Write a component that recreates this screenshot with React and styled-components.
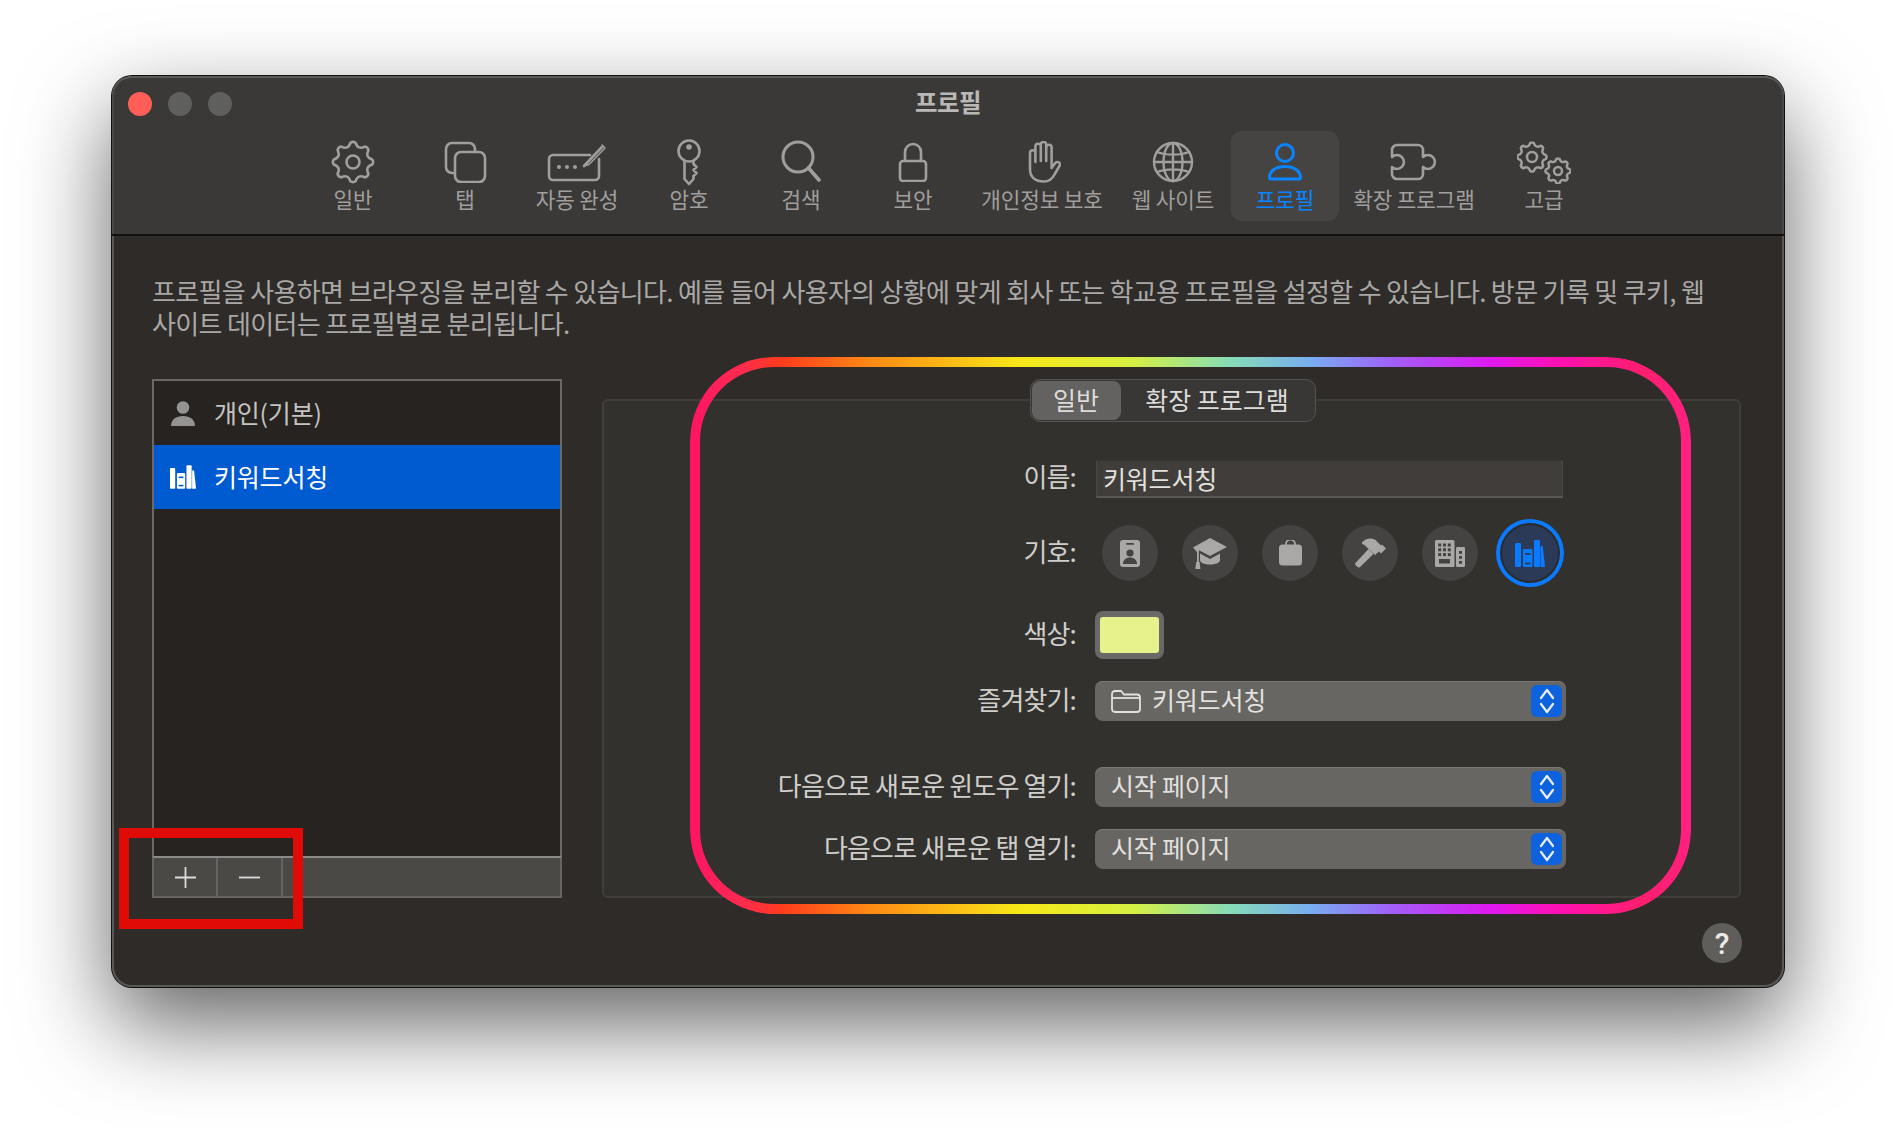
import React from 'react'
import styled, { createGlobalStyle } from 'styled-components'

const GlobalStyle = createGlobalStyle`
  html, body {
    margin: 0;
    padding: 0;
    background: #ffffff;
  }
  body {
    font-family: "Noto Sans CJK KR", "Noto Sans", sans-serif;
    overflow: hidden;
  }
`

const Page = styled.div`
  width: 1896px;
  height: 1136px;
  padding: 76px 0 0 112px;
  box-sizing: border-box;
  background: #ffffff;
`
const Window = styled.div`
  position: relative;
  width: 1672px;
  height: 911px;
  display: flex;
  flex-direction: column;
  border-radius: 20px;
  background: #2e2b29;
  box-shadow: 0 0 0 1px #111, inset 0 0 0 2px #5a5956, 0 36px 90px rgba(0, 0, 0, 0.62);
`
const TitleBar = styled.div`
  height: 160px;
  flex: none;
  display: flex;
  flex-direction: column;
  box-sizing: border-box;
  background: #3a3938;
  border-radius: 20px 20px 0 0;
  border-bottom: 2px solid #131211;
  box-shadow: inset 0 2px 0 #5a5956, inset 2px 0 0 #4a4947, inset -2px 0 0 #4a4947;
`
const TitleRow = styled.div`
  height: 55px;
  flex: none;
  display: grid;
  grid-template-columns: 1fr auto 1fr;
  align-items: center;
  padding: 0 16px;
`
const Lights = styled.div`
  display: flex;
  gap: 16px;
  margin-top: 1px;
`
const Light = styled.span`
  width: 24px;
  height: 24px;
  border-radius: 50%;
  background: ${({ $color }) => $color};
`
const Title = styled.div`
  font-size: 24.5px;
  font-weight: 700;
  color: #b9b8b6;
  line-height: 30px;
  letter-spacing: -0.5px;
  margin-bottom: 3px;
`
const Toolbar = styled.div`
  display: flex;
  justify-content: center;
`
const ToolItem = styled.div`
  width: ${({ $w }) => $w}px;
  height: 90px;
  box-sizing: border-box;
  padding-top: 9px;
  display: flex;
  flex-direction: column;
  align-items: center;
  border-radius: 11px;
  background: ${({ $active }) => ($active ? '#454443' : 'transparent')};
  color: ${({ $active }) => ($active ? '#0a84ff' : '#a09f9d')};
`
const ToolIcon = styled.div`
  height: 44px;
  display: flex;
  align-items: center;
  justify-content: center;
`
const ToolLabel = styled.div`
  font-size: 21.3px;
  line-height: 26px;
  margin-top: 2px;
  white-space: nowrap;
  letter-spacing: -0.1px;
`
const Body = styled.div`
  flex: 1;
  display: flex;
  flex-direction: column;
  padding: 39px 43px 0 40px;
`
const Desc = styled.p`
  margin: 0;
  font-size: 26px;
  line-height: 32px;
  color: #a9a8a6;
  white-space: nowrap;
  letter-spacing: -0.66px;
`
const Main = styled.div`
  display: flex;
  margin-top: 40px;
  gap: 40px;
  height: 519px;
`
const ListBox = styled.div`
  width: 410px;
  flex: none;
  display: flex;
  flex-direction: column;
  box-sizing: border-box;
  border: 2px solid #6a6967;
  background: #262320;
`
const ListRows = styled.div`
  flex: 1;
`
const ListRow = styled.div`
  height: 64px;
  display: flex;
  align-items: center;
  box-sizing: border-box;
  padding-left: 15px;
  gap: 18px;
  font-size: 25px;
  letter-spacing: -0.2px;
  background: ${({ $selected }) => ($selected ? '#005bd1' : 'transparent')};
  color: ${({ $selected }) => ($selected ? '#ffffff' : '#c4c3c1')};
`
const RowText = styled.span`
  padding-bottom: 2px;
`
const RowIcon = styled.div`
  width: 27px;
  display: flex;
  justify-content: center;
  color: ${({ $selected }) => ($selected ? '#ffffff' : '#949391')};
`
const ListFooter = styled.div`
  height: 38px;
  display: flex;
  border-top: 2px solid #8a8a88;
  background: #4a4946;
  margin: 0 -2px -2px;
  border-left: 2px solid #666563;
  border-right: 2px solid #666563;
  border-bottom: 2px solid #666563;
`
const FooterButton = styled.div`
  width: ${({ $w }) => $w}px;
  display: flex;
  align-items: center;
  justify-content: center;
  border-right: 2px solid #666563;
  color: #dddcda;
`
const Panel = styled.div`
  flex: 1;
  margin-top: 20px;
  box-sizing: border-box;
  border: 2px solid #403e3b;
  border-radius: 6px;
  background: #33312e;
  display: flex;
  flex-direction: column;
  align-items: center;
`
const Tabs = styled.div`
  margin: -22px 0 0 2px;
  height: 43px;
  box-sizing: border-box;
  display: flex;
  padding: 1px;
  border: 1px solid #55534f;
  border-radius: 10px;
  background: #393735;
`
const Tab = styled.div`
  width: ${({ $w }) => $w}px;
  display: flex;
  align-items: center;
  justify-content: center;
  font-size: 25px;
  padding-bottom: 3px;
  box-sizing: border-box;
  border-radius: 8px;
  color: #dddcda;
  background: ${({ $active }) => ($active ? '#636260' : 'transparent')};
`
const Form = styled.div`
  align-self: stretch;
  display: flex;
  flex-direction: column;
`
const FormRow = styled.div`
  display: grid;
  grid-template-columns: 472px 1fr;
  column-gap: 19px;
  align-items: center;
  height: ${({ $h }) => $h}px;
  margin-top: ${({ $mt }) => $mt}px;
`
const Label = styled.div`
  text-align: right;
  font-size: 26px;
  line-height: 34px;
  padding-bottom: 5px;
  color: #cfcecb;
  white-space: nowrap;
  letter-spacing: -0.85px;
`
const NameInput = styled.div`
  margin-left: 1px;
  width: 467px;
  height: 38px;
  box-sizing: border-box;
  padding-left: 6px;
  display: flex;
  align-items: center;
  font-size: 25px;
  letter-spacing: -0.2px;
  color: #e2e1df;
  background: #403d3a;
  border: 1px solid #4a4845;
  border-top-color: #383633;
  border-bottom: 2px solid #5a5855;
`
const Symbols = styled.div`
  display: flex;
  align-items: center;
  gap: 24px;
  padding-left: 7px;
`
const SymbolButton = styled.div`
  width: 56px;
  height: 56px;
  flex: none;
  border-radius: 50%;
  display: flex;
  align-items: center;
  justify-content: center;
  background: ${({ $active }) => ($active ? '#2a3a57' : '#444342')};
  color: ${({ $active }) => ($active ? '#0a7aff' : '#a9a8a6')};
  ${({ $active }) => $active && 'box-shadow: 0 0 0 2px #2c2b2a, 0 0 0 6px #0a7aff;'}
`
const ColorWell = styled.div`
  width: 69px;
  height: 48px;
  box-sizing: border-box;
  padding: 6px 5px;
  border-radius: 8px;
  background: #6a6967;
  &::after {
    content: '';
    display: block;
    height: 100%;
    border-radius: 3px;
    background: #e8f28c;
  }
`
const Select = styled.div`
  width: 471px;
  height: 40px;
  box-sizing: border-box;
  display: flex;
  align-items: center;
  padding: 0 4px 0 16px;
  gap: 11px;
  border-radius: 8px;
  background: #676663;
  box-shadow: inset 0 1px 0 #7a7977;
  font-size: 25px;
  color: #e2e1df;
`
const SelectText = styled.span`
  flex: 1;
  padding-bottom: 4px;
  letter-spacing: -0.2px;
`
const Stepper = styled.div`
  width: 31px;
  height: 32px;
  flex: none;
  border-radius: 6px;
  background: #0f62dd;
  display: flex;
  align-items: center;
  justify-content: center;
`
const HelpRow = styled.div`
  display: flex;
  justify-content: flex-end;
  margin-top: 25px;
  margin-right: -1px;
`
const Help = styled.div`
  width: 40px;
  height: 40px;
  border-radius: 50%;
  background: #5f5e5b;
  color: #ebeae8;
  display: flex;
  align-items: center;
  justify-content: center;
  font-family: Roboto, sans-serif;
  font-size: 30px;
  font-weight: 500;
`
const RainbowRing = styled.div`
  position: absolute;
  left: 578px;
  top: 281px;
  width: 1001px;
  height: 557px;
  box-sizing: border-box;
  padding: 10px;
  border-radius: 84px;
  pointer-events: none;
  background: linear-gradient(
    90deg,
    #ff1464 0%,
    #ff2a50 5%,
    #ff3a1e 9%,
    #ff8a14 18%,
    #f8e818 33%,
    #d8f040 44%,
    #86dcb8 54%,
    #78aef0 62%,
    #a060f8 70%,
    #e018f0 80%,
    #ff10b0 87%,
    #ff1e6e 95%,
    #ff2080 100%
  );
  mask: linear-gradient(#000 0 0) content-box exclude, linear-gradient(#000 0 0);
`
const RedBox = styled.div`
  position: absolute;
  left: 7px;
  top: 752px;
  width: 184px;
  height: 101px;
  box-sizing: border-box;
  border: 10px solid #e00a06;
  pointer-events: none;
`

// icons
const gearPath = (cx, cy, R, r, n) => {
  const pt = (rad, a) => `${(cx + rad * Math.cos(a)).toFixed(2)} ${(cy + rad * Math.sin(a)).toFixed(2)}`
  const s = (Math.PI * 2) / n
  let d = ''
  for (let i = 0; i < n; i++) {
    const a = i * s - Math.PI / 2
    const start = pt(R * 0.97, a - s * 0.17)
    const end = pt(R * 0.97, a + s * 0.17)
    if (i === 0) d += `M${start}`
    d += ` Q${pt(R * 1.05, a)} ${end}`
    const mid = a + s / 2
    d += ` Q${pt(r * 0.78, mid)} ${pt(R * 0.97, a + s - s * 0.17)}`
  }
  return d + 'Z'
}

const Stroke = ({ w, h, sw = 2.6, children }) => (
  <svg width={w} height={h} viewBox={`0 0 ${w} ${h}`} fill="none" stroke="currentColor"
    strokeWidth={sw} strokeLinecap="round" strokeLinejoin="round">
    {children}
  </svg>
)

const GearIcon = () => (
  <Stroke w={44} h={44}>
    <path d={gearPath(22, 22, 20, 16.5, 8)} />
    <circle cx="22" cy="22" r="6.5" />
  </Stroke>
)
const TabsIcon = () => (
  <Stroke w={44} h={42}>
    <path d="M10 31h-1a6 6 0 0 1-6-6V7a6 6 0 0 1 6-6h17a6 6 0 0 1 6 6v3" transform="translate(0 1)" />
    <rect x="12" y="11" width="30" height="30" rx="6" />
  </Stroke>
)
const AutofillIcon = () => (
  <Stroke w={62} h={40}>
    <path d="M44 13H7a4 4 0 0 0-4 4v17a4 4 0 0 0 4 4h42a4 4 0 0 0 4-4V17" />
    <path d="M38 24L56 5" />
    <path d="M38 24l5-1.5L59 6l-3-3" strokeWidth="1.6" />
    <circle cx="13" cy="25" r="2" fill="currentColor" stroke="none" />
    <circle cx="21" cy="25" r="2" fill="currentColor" stroke="none" />
    <circle cx="29" cy="25" r="2" fill="currentColor" stroke="none" />
  </Stroke>
)
const KeyIcon = () => (
  <Stroke w={26} h={48}>
    <circle cx="13" cy="13" r="10.5" />
    <circle cx="13" cy="9" r="2.8" fill="currentColor" stroke="none" />
    <path d="M8.5 23V41L13 46L17.5 41V38l3-3-3-3 3-3-3-3V23" />
  </Stroke>
)
const SearchIcon = () => (
  <Stroke w={40} h={44} sw={3}>
    <circle cx="17" cy="17" r="15" />
    <path d="M27.5 28L38 40" strokeWidth="3.6" />
  </Stroke>
)
const LockIcon = () => (
  <Stroke w={30} h={40}>
    <rect x="2" y="19" width="26" height="20" rx="3" />
    <path d="M7 19V10a8 8 0 0 1 16 0V19" />
  </Stroke>
)
const HandIcon = () => (
  <Stroke w={38} h={42}>
    <path d="M7 28V12a2.700 2.700 0 0 1 5.400 0V21M12.400 21V5.500a2.700 2.700 0 0 1 5.400 0V20M17.800 20V3.700a2.700 2.700 0 0 1 5.400 0V20M23.200 20V6.500a2.700 2.700 0 0 1 5.400 0V27l3.200-4.600c1.800-2.600 6.200-1 5 2L31.500 33.500C29 38.500 25 40.500 21 40.500C12 40.500 7 36 7 28" />
  </Stroke>
)
const GlobeIcon = () => (
  <Stroke w={42} h={42} sw={2.4}>
    <circle cx="21" cy="21" r="19" />
    <ellipse cx="21" cy="21" rx="9.5" ry="19" />
    <path d="M21 2V40M2 21H40M5 11C14 14.5 28 14.5 37 11M5 31C14 27.5 28 27.5 37 31" />
  </Stroke>
)
const PersonIcon = () => (
  <Stroke w={36} h={40} sw={3}>
    <circle cx="18" cy="11" r="8.5" />
    <path d="M2.5 35.5C2.5 29 9 24.5 18 24.5S33.5 29 33.5 35.5C33.5 36.5 33 37 32 37H4C3 37 2.5 36.5 2.500 35.500Z" />
  </Stroke>
)
const PuzzleIcon = () => (
  <Stroke w={48} h={38}>
    <path d="M7 2H28a5 5 0 0 1 5 5V14a7 7 0 1 1 0 10V31a5 5 0 0 1-5 5H7a5 5 0 0 1-5-5V24a7 7 0 1 0 0-10V7a5 5 0 0 1 5-5Z" />
  </Stroke>
)
const GearsIcon = () => (
  <Stroke w={54} h={44} sw={2.5}>
    <path d={gearPath(15, 17, 14.5, 12, 8)} />
    <circle cx="15" cy="17" r="5" />
    <path d={gearPath(41, 31, 12.5, 10.2, 8)} />
    <circle cx="41" cy="31" r="4" />
  </Stroke>
)

const Books = ({ w = 30, h = 27, cut = '#2a3a57' }) => (
  <svg width={w} height={h} viewBox="0 0 30 27" fill="currentColor">
    <rect x="0" y="3" width="6" height="24" rx="1.2" />
    <rect x="8" y="9" width="9.5" height="18" rx="1.2" />
    <rect x="10" y="13" width="5.5" height="1.8" fill={cut} />
    <rect x="10" y="22.5" width="5.5" height="1.8" fill={cut} />
    <rect x="19" y="0" width="6" height="27" rx="1.2" />
    <path d="M25.5 6.2l2.2-.4L30 26.2c0 .5-.3.8-.8.8h-3.7z" />
  </svg>
)
const UserFill = () => (
  <svg width="24" height="25" viewBox="0 0 24 25" fill="currentColor">
    <circle cx="12" cy="6.5" r="6.3" />
    <path d="M0 25C0 18.5 5 15 12 15s12 3.5 12 10z" />
  </svg>
)
const BadgeSymbol = () => (
  <svg width="20" height="27" viewBox="0 0 20 27" fill="currentColor">
    <rect width="20" height="27" rx="3" />
    <rect x="6" y="3" width="8" height="1.8" rx=".9" fill="#444342" />
    <circle cx="10" cy="13" r="3.6" fill="#444342" />
    <path d="M3 24c0-4 3-6.500 7-6.500S17 20 17 24z" fill="#444342" />
  </svg>
)
const CapSymbol = () => (
  <svg width="34" height="31" viewBox="0 0 34 31" fill="currentColor">
    <path d="M17 0L34 9 17 18 6 12.300V15L3.500 13.500 0 9.500Z" />
    <path d="M7 15.500V22C7 28 27 28 27 22V15.500L17 21Z" />
    <rect x="4" y="13" width="1.800" height="11" />
    <path d="M3.200 24h3.400l.8 7H2.400Z" />
  </svg>
)
const BagSymbol = () => (
  <svg width="23" height="26" viewBox="0 0 23 26" fill="currentColor">
    <rect y="4.500" width="23" height="21" rx="3.500" />
    <path d="M7 5V4a4 4 0 0 1 9 0v1" fill="none" stroke="currentColor" strokeWidth="1.800" />
  </svg>
)
const HammerSymbol = () => (
  <svg width="32" height="30" viewBox="0 0 32 30" fill="currentColor">
    <path d="M1 25.500L14.500 11l5 5L5.500 29.500C4 30 0.500 26.500 1 25.500Z" />
    <path d="M8 4.500C12 0 19 -1 23 3.500L27 7.500 28 6.500 32 10.500 27 15.500 25 13.500 21 17 13 9.500C12 8 10 6.500 8 6Z" />
  </svg>
)
const BuildingSymbol = () => {
  const cells = []
  for (let r = 0; r < 3; r++) {
    for (let c = 0; c < 3; c++) {
      cells.push(<rect key={`${r}${c}`} x={3.2 + c * 4.8} y={3.5 + r * 4.8} width="3" height="3" fill="#444342" />)
    }
  }
  return (
    <svg width="30" height="27" viewBox="0 0 30 27" fill="currentColor">
      <rect width="19.500" height="27" rx="1.500" />
      {cells}
      <rect x="4" y="19" width="11" height="4.500" fill="#444342" />
      <rect x="21" y="7" width="9" height="20" rx="1.200" />
      {[11, 16, 21].map((y) => (
        <rect key={y} x="24" y={y} width="3" height="2.800" fill="#444342" />
      ))}
    </svg>
  )
}
const FolderIcon = () => (
  <svg width="30" height="24" viewBox="0 0 30 24" fill="none" stroke="#e2e1df" strokeWidth="1.800">
    <path d="M1 5a3 3 0 0 1 3-3h6l3 3.500h13a3 3 0 0 1 3 3V20a3 3 0 0 1-3 3H4a3 3 0 0 1-3-3Z" />
    <path d="M1 9H29" />
  </svg>
)
const Chevrons = () => (
  <svg width="18" height="26" viewBox="0 0 18 26" fill="none" stroke="#e8eefc" strokeWidth="2.200"
    strokeLinecap="round" strokeLinejoin="round">
    <path d="M3 10L9 2l6 8" />
    <path d="M3 16l6 8 6-8" />
  </svg>
)
const Plus = () => (
  <svg width="21" height="21" viewBox="0 0 21 21" stroke="currentColor" strokeWidth="1.800">
    <path d="M10.500 0V21M0 10.500H21" />
  </svg>
)
const Minus = () => (
  <svg width="21" height="21" viewBox="0 0 21 21" stroke="currentColor" strokeWidth="1.800">
    <path d="M0 10.500H21" />
  </svg>
)

const tools = [
  { label: '일반', w: 112, icon: <GearIcon /> },
  { label: '탭', w: 112, icon: <TabsIcon /> },
  { label: '자동 완성', w: 112, icon: <AutofillIcon /> },
  { label: '암호', w: 112, icon: <KeyIcon /> },
  { label: '검색', w: 112, icon: <SearchIcon /> },
  { label: '보안', w: 112, icon: <LockIcon /> },
  { label: '개인정보 보호', w: 146, icon: <HandIcon /> },
  { label: '웹 사이트', w: 116, icon: <GlobeIcon /> },
  { label: '프로필', w: 108, icon: <PersonIcon />, active: true },
  { label: '확장 프로그램', w: 150, icon: <PuzzleIcon /> },
  { label: '고급', w: 110, icon: <GearsIcon /> },
]

const symbols = [<BadgeSymbol />, <CapSymbol />, <BagSymbol />, <HammerSymbol />, <BuildingSymbol />]

function App() {
  return (
    <Page>
      <GlobalStyle />
      <Window>
        <TitleBar>
          <TitleRow>
            <Lights>
              <Light $color="#ff5f57" />
              <Light $color="#5f5f5e" />
              <Light $color="#5f5f5e" />
            </Lights>
            <Title>프로필</Title>
          </TitleRow>
          <Toolbar>
            {tools.map((t) => (
              <ToolItem key={t.label} $w={t.w} $active={t.active}>
                <ToolIcon>{t.icon}</ToolIcon>
                <ToolLabel>{t.label}</ToolLabel>
              </ToolItem>
            ))}
          </Toolbar>
        </TitleBar>
        <Body>
          <Desc>
            프로필을 사용하면 브라우징을 분리할 수 있습니다. 예를 들어 사용자의 상황에 맞게 회사 또는 학교용 프로필을 설정할 수 있습니다. 방문 기록 및 쿠키, 웹
            <br />
            사이트 데이터는 프로필별로 분리됩니다.
          </Desc>
          <Main>
            <ListBox>
              <ListRows>
                <ListRow>
                  <RowIcon><UserFill /></RowIcon>
                  <RowText>개인(기본)</RowText>
                </ListRow>
                <ListRow $selected>
                  <RowIcon $selected><Books w={26} h={24} cut="#005bd1" /></RowIcon>
                  <RowText>키워드서칭</RowText>
                </ListRow>
              </ListRows>
              <ListFooter>
                <FooterButton $w={62}><Plus /></FooterButton>
                <FooterButton $w={63}><Minus /></FooterButton>
              </ListFooter>
            </ListBox>
            <Panel>
              <Tabs>
                <Tab $w={89} $active>일반</Tab>
                <Tab $w={193}>확장 프로그램</Tab>
              </Tabs>
              <Form>
                <FormRow $h={38} $mt={37}>
                  <Label>이름:</Label>
                  <NameInput>키워드서칭</NameInput>
                </FormRow>
                <FormRow $h={56} $mt={28}>
                  <Label>기호:</Label>
                  <Symbols>
                    {symbols.map((s, i) => (
                      <SymbolButton key={i}>{s}</SymbolButton>
                    ))}
                    <SymbolButton $active><Books /></SymbolButton>
                  </Symbols>
                </FormRow>
                <FormRow $h={48} $mt={30}>
                  <Label>색상:</Label>
                  <ColorWell />
                </FormRow>
                <FormRow $h={40} $mt={22}>
                  <Label>즐겨찾기:</Label>
                  <Select>
                    <FolderIcon />
                    <SelectText>키워드서칭</SelectText>
                    <Stepper><Chevrons /></Stepper>
                  </Select>
                </FormRow>
                <FormRow $h={40} $mt={46}>
                  <Label>다음으로 새로운 윈도우 열기:</Label>
                  <Select>
                    <SelectText>시작 페이지</SelectText>
                    <Stepper><Chevrons /></Stepper>
                  </Select>
                </FormRow>
                <FormRow $h={40} $mt={22}>
                  <Label>다음으로 새로운 탭 열기:</Label>
                  <Select>
                    <SelectText>시작 페이지</SelectText>
                    <Stepper><Chevrons /></Stepper>
                  </Select>
                </FormRow>
              </Form>
            </Panel>
          </Main>
          <HelpRow>
            <Help>?</Help>
          </HelpRow>
        </Body>
        <RainbowRing />
        <RedBox />
      </Window>
    </Page>
  )
}

export default App
